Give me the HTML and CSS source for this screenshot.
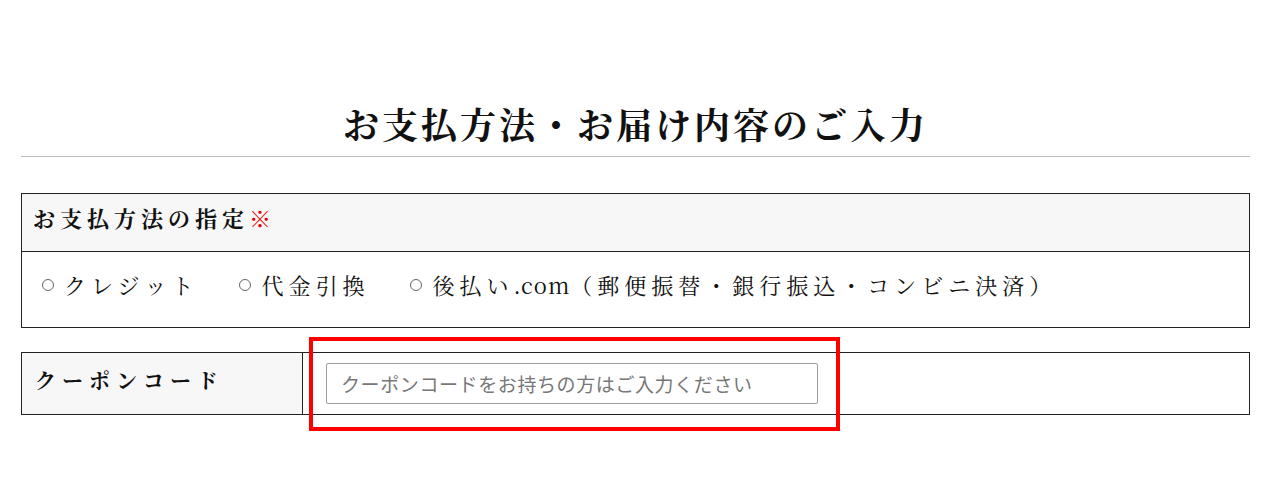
FILE: index.html
```html
<!DOCTYPE html>
<html lang="ja">
  <head>
    <meta charset="UTF-8" />
    <meta name="viewport" content="width=device-width, initial-scale=1.0" />
    <title>お支払方法・お届け内容のご入力</title>
    <link rel="stylesheet" href="styles.css">
  </head>
  <body>
    <main class="page">
      <header class="title">
        <h1>お支払方法・お届け内容のご入力</h1>
      </header>

      <section class="box">
        <div class="box-head">
          お支払方法の指定<span class="required">※</span>
        </div>
        <div class="box-body">
          <label class="option"><span class="radio"></span>クレジット</label>
          <label class="option"><span class="radio"></span>代金引換</label>
          <label class="option"><span class="radio"></span>後払い<span class="latin">.com</span>（郵便振替・銀行振込・コンビニ決済）</label>
        </div>
      </section>

      <section class="coupon">
        <div class="coupon-label">クーポンコード</div>
        <div class="coupon-field">
          <input type="text" class="coupon-input" placeholder="クーポンコードをお持ちの方はご入力ください" />
        </div>
        <div class="highlight"></div>
      </section>
    </main>
  </body>
</html>
```

FILE: styles.css
```css
body {
  margin: 0px;
  background-color: #fff;
  color: #111;
  font-family: "Noto Serif CJK JP", "Liberation Serif", "Noto Sans CJK JP", serif;
}

.page {
  min-height: 500px;
  box-sizing: border-box;
  padding: 0px 30px 0px 21px;
}

.title {
  padding: 99px 0px 7px 0px;
  border-bottom: 1px solid #bdbdbd;
  text-align: center;
}

h1 {
  margin: 0px;
  font-size: 36px;
  line-height: 50px;
  font-weight: bold;
  letter-spacing: 3px;
}

.box {
  margin-top: 36px;
  border: 1px solid #222;
}

.box-head {
  height: 58px;
  box-sizing: border-box;
  display: flex;
  align-items: center;
  padding: 0px 0px 10px 11px;
  background-color: #f7f7f7;
  border-bottom: 1px solid #222;
  font-size: 22px;
  font-weight: bold;
  letter-spacing: 5px;
}

.required {
  color: #e60000;
  font-weight: normal;
}

.box-body {
  height: 75px;
  box-sizing: border-box;
  display: flex;
  align-items: center;
  gap: 39px;
  padding: 0px 0px 10px 18px;
  font-size: 22px;
  letter-spacing: 5px;
}

.option {
  display: flex;
  align-items: center;
}

.radio {
  width: 12px;
  height: 12px;
  box-sizing: border-box;
  border: 1.5px solid #666;
  border-radius: 50%;
  margin: 0px 10px 0px 2px;
  flex-shrink: 0;
}

.latin {
  letter-spacing: 1px;
}

.coupon {
  position: relative;
  margin-top: 24px;
  display: flex;
  height: 63px;
  border: 1px solid #222;
  box-sizing: border-box;
}

.coupon-label {
  width: 281px;
  display: flex;
  align-items: center;
  padding: 0px 0px 10px 13px;
  box-sizing: border-box;
  background-color: #f7f7f7;
  border-right: 1px solid #222;
  font-size: 21px;
  font-weight: bold;
  letter-spacing: 6px;
}

.coupon-field {
  flex: 1;
  display: flex;
  align-items: center;
  padding-left: 23px;
}

.coupon-input {
  width: 492px;
  height: 41px;
  box-sizing: border-box;
  border: 1px solid #a0a0a0;
  border-radius: 2px;
  padding: 0px 14px;
  font-family: "Noto Sans CJK JP", sans-serif;
  font-size: 19px;
  letter-spacing: 0.6px;
}

.coupon-input::placeholder {
  color: #777;
}

.highlight {
  position: absolute;
  left: 287px;
  top: -16px;
  width: 531px;
  height: 94px;
  box-sizing: border-box;
  border: 4px solid #f00;
  pointer-events: none;
}
```
